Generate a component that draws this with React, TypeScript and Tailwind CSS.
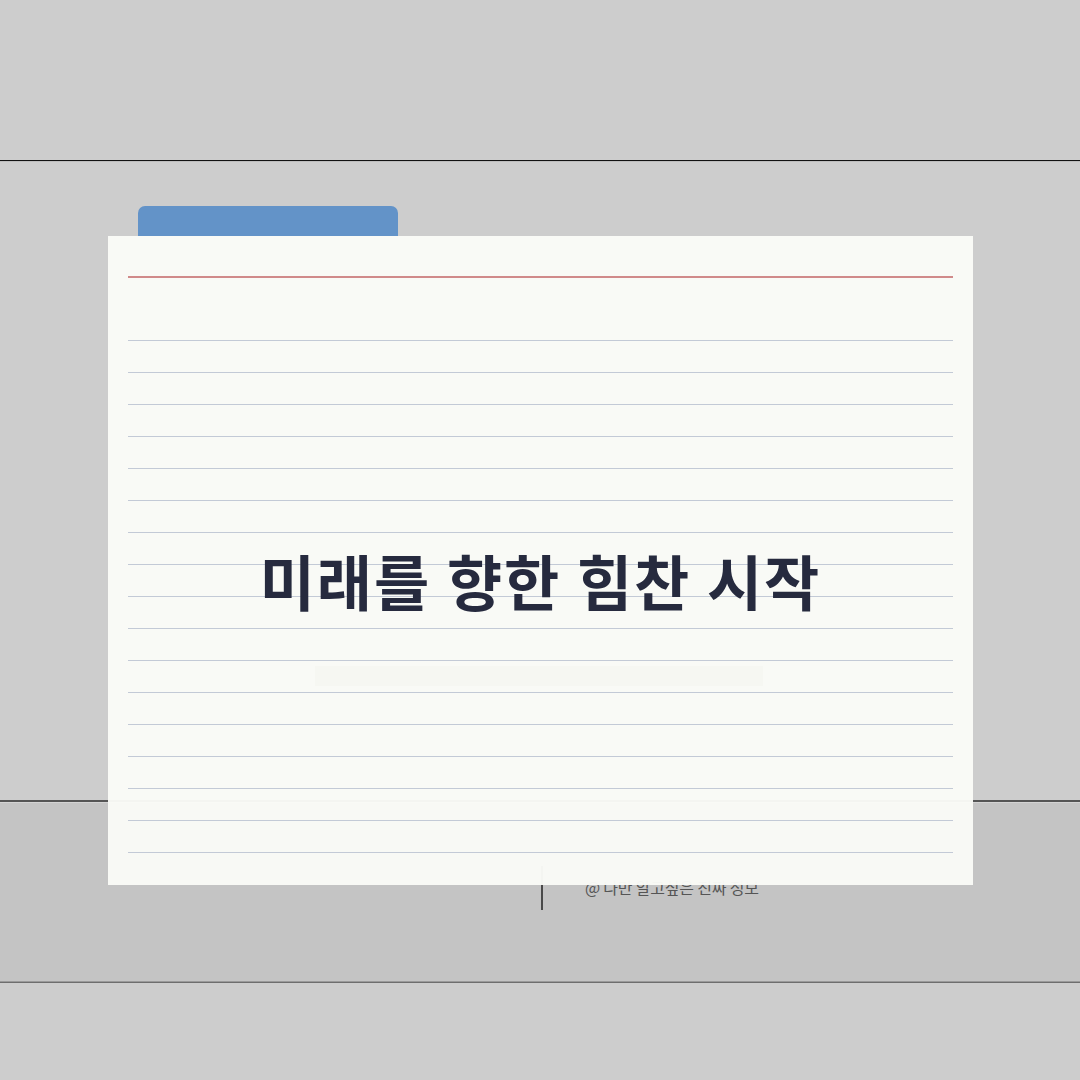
import React from 'react';

const font = { fontFamily: '"Noto Sans CJK KR", "Noto Sans", sans-serif' };

export default function App() {
    const rows = Array.from({ length: 17 });

    return (
        <div className="relative w-[1080px] h-[1080px] overflow-hidden bg-[#cdcdcd]" style={font}>
            {/* Background page */}
            <div className="h-[160px]" />
            <div className="h-px bg-[#111]" />
            <div className="h-px bg-[#bdbdbd]" />
            <div className="h-[638px]" />
            <div className="h-[2px] bg-[#555]" />
            <div className="h-px bg-[#d4d4d4]" />
            <div className="h-[178px] bg-[#c4c4c4] flex items-start pl-[541px] pt-[63px]">
                <div className="w-[2px] h-[44px] bg-[#4a4a4a]" />
                <span className="ml-[42px] mt-[13px] text-[16px] leading-none text-[#555] tracking-[-0.2px]">@ 나만 알고싶은 진짜 정보</span>
            </div>
            <div className="h-px bg-[#9a9a9a]" />
            <div className="h-px bg-[#6e6e6e]" />

            {/* Note card */}
            <div className="absolute left-[108px] top-[206px] w-[865px] flex flex-col">
                <div className="ml-[30px] w-[260px] h-[30px] rounded-t-[7px] bg-[#6393c8]" />
                <div className="relative h-[649px] bg-[#fafbf7]/[0.97] px-5 pt-10">
                    <div className="h-[2px] bg-[#d08a8a]" />
                    <div className="h-[31px]" />
                    {rows.map((_, i) => (
                        <div key={i} className="h-8 border-b border-[#c3cad6]" />
                    ))}

                    <div className="absolute left-[207px] top-[430px] w-[448px] h-[20px] bg-[#f6f7f2]" />
                    <h1 className="absolute left-0 right-0 top-[314px] text-center text-[60px] leading-none font-bold text-[#262a3e] tracking-[2px]">
                        미래를 향한 힘찬 시작
                    </h1>
                </div>
            </div>
        </div>
    );
}
